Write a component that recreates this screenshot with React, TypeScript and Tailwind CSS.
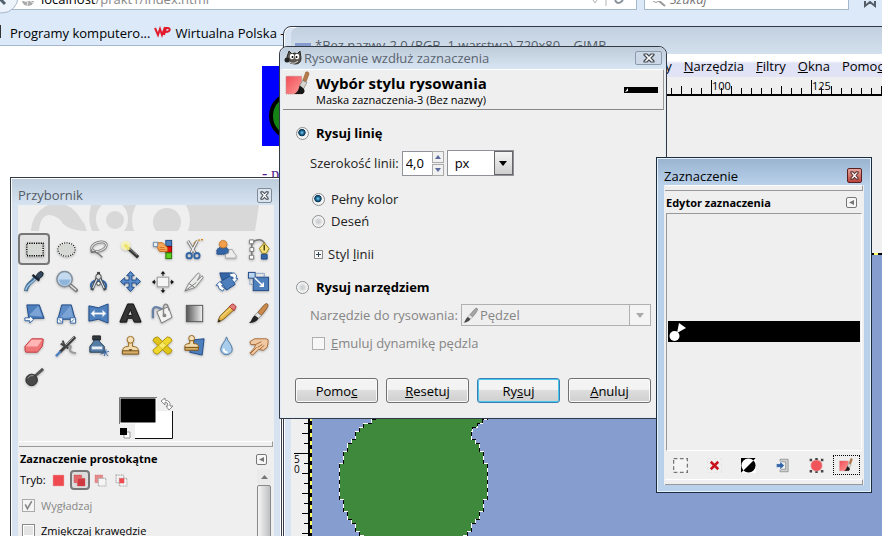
import type { ReactNode } from "react";

const INK = "#34495e";
const BLUE = "#4d7fbd";
const NAVY = "#204a87";

function Glyph({ children, size = 24 }: { children: ReactNode; size?: number }) {
  return (
    <svg width={size} height={size} viewBox="0 0 24 24" fill="none" aria-hidden="true">
      {children}
    </svg>
  );
}

function PaintBrush() {
  return (
    <>
      <path d="M18 3Q21 0 22 3Q22 6 15 14L11 11Z" fill="#c98a4b" stroke="#7a4a1c" strokeWidth=".8" />
      <path d="M11 11L15 14L12 17L8 14Z" fill="#e3e5e3" stroke="#777" strokeWidth=".7" />
      <path d="M8 14L12 17C10 21 6 22 2 22C5 20 5 16 8 14Z" fill="#222" />
    </>
  );
}

const tools: { name: string; art: ReactNode }[] = [
  {
    name: "Zaznaczenie prostokątne",
    art: (
      <>
        <rect x="4" y="5.500" width="17" height="13" fill="#d5d8d3" stroke="#fff" strokeWidth="1.500" />
        <rect x="4" y="5.500" width="17" height="13" stroke="#000" strokeWidth="1.500" strokeDasharray="1.400 1" />
      </>
    ),
  },
  {
    name: "Zaznaczenie eliptyczne",
    art: (
      <>
        <ellipse cx="12" cy="12" rx="9" ry="7" fill="#d5d8d3" stroke="#fff" strokeWidth="1.500" />
        <ellipse cx="12" cy="12" rx="9" ry="7" stroke="#222" strokeWidth="1.300" strokeDasharray="1.300 1.200" />
      </>
    ),
  },
  {
    name: "Odręczne zaznaczanie",
    art: (
      <>
        <ellipse cx="12.500" cy="9" rx="8" ry="4.500" transform="rotate(-18 12.5 9)" stroke="#777" strokeWidth="2.800" />
        <ellipse cx="12.500" cy="9" rx="8" ry="4.500" transform="rotate(-18 12.5 9)" stroke="#e3e3e3" strokeWidth="1.200" />
        <path d="M5 12Q3 15 6 15Q9 13 9 15Q12 16 16 20" stroke="#777" strokeWidth="1.500" />
      </>
    ),
  },
  {
    name: "Rozmyte zaznaczenie",
    art: (
      <>
        <circle cx="7" cy="8" r="5" fill="#fff9b0" opacity=".8" />
        <path d="M10 11L20 20" stroke="#333" strokeWidth="3.400" />
        <path d="M6 7L11 12" stroke="#eee36a" strokeWidth="3" />
        <path d="M11 11L19 18" stroke="#999" strokeWidth="1" />
      </>
    ),
  },
  {
    name: "Zaznaczenie według koloru",
    art: (
      <>
        <rect x="15.500" y="2.500" width="6" height="6" fill={BLUE} stroke={NAVY} />
        <rect x="15.500" y="9" width="6" height="6" fill="#e01010" stroke="#800" />
        <rect x="15.500" y="15.500" width="6" height="6" fill="#5fd020" stroke="#287a08" />
        <path d="M7 5L12 5L17 10V14L9 14L6 9Z" fill="#f7a85a" stroke="#c86416" />
        <path d="M2.500 4.500H7V9H2.500Z" fill="#e8eef5" stroke="#6b88a8" />
        <path d="M9 12H15M9 10H14" stroke="#c86416" strokeWidth=".8" />
      </>
    ),
  },
  {
    name: "Nożyce",
    art: (
      <>
        <path d="M11 9Q11 1 22 2" stroke="#d18a20" strokeWidth="1.500" strokeDasharray="2 1" />
        <path d="M5 3L13 16M15 3L8 16" stroke="#777" strokeWidth="3" />
        <path d="M5 3L13 16M15 3L8 16" stroke="#eee" strokeWidth="1.300" />
        <circle cx="6.500" cy="18.500" r="2.800" stroke="#3465a4" strokeWidth="2" />
        <circle cx="14.500" cy="18.500" r="2.800" stroke="#3465a4" strokeWidth="2" />
      </>
    ),
  },
  {
    name: "Zaznaczanie pierwszego planu",
    art: (
      <>
        <path d="M2 17V12L5 10H12L14 12V17Z" fill="#3465a4" stroke={NAVY} strokeDasharray="2 .500" />
        <circle cx="8.500" cy="6.500" r="4" fill="#f2a04c" stroke="#b55d10" strokeDasharray="1.500 .700" />
        <path d="M11 21V17L14 16L15 12L18 12L20 16L22 18V21Z" fill="#ececec" stroke="#999" strokeWidth=".8" />
      </>
    ),
  },
  {
    name: "Ścieżki",
    art: (
      <>
        <path d="M5 3V21M6 4C15 -1 19 4 19 9" stroke="#777" strokeWidth="1.500" />
        <path d="M2.500 2H7V6H2.500ZM3 10H7V14H3ZM2.500 18H7V22H2.500Z" fill="#fff" stroke="#777" />
        <path d="M18 5L23 11L20 16H16L13 11Z" fill="#f5e581" stroke="#9a7b0c" />
        <path d="M18 7V13" stroke="#4a3c08" strokeWidth="1.500" />
        <path d="M15 17H21V22H15Z" fill="#3465a4" stroke={NAVY} />
      </>
    ),
  },
  {
    name: "Pobranie koloru",
    art: (
      <>
        <path d="M3 22C4 13 9 14 13 8" stroke="#406d91" strokeWidth="4" />
        <path d="M3 21C4 14 10 14 13 9" stroke="#9cc3e6" strokeWidth="1.500" />
        <path d="M10 5L17 11" stroke="#17222d" strokeWidth="2.500" />
        <path d="M13 7L16 3Q19 0 21 3Q22 6 17 9Z" fill={INK} stroke="#17222d" />
      </>
    ),
  },
  {
    name: "Powiększenie",
    art: (
      <>
        <path d="M16 16L22 21" stroke="#777" strokeWidth="4" strokeLinecap="round" />
        <path d="M16 16L22 21" stroke="#ddd" strokeWidth="1.500" />
        <circle cx="10" cy="9.500" r="8" fill="#c4daf1" stroke="#818d98" strokeWidth="1.500" />
        <path d="M4 10H16Q15 16 10 16Q5 16 4 10" fill="#8fb5db" />
      </>
    ),
  },
  {
    name: "Miara",
    art: (
      <>
        <path d="M12 2V7" stroke="#444" strokeWidth="3" />
        <path d="M5 20Q2 14 8 11M19 20Q22 14 16 11M8 13Q12 10 16 13" stroke="#3465a4" strokeWidth="2" />
        <path d="M11 7L5 21M13 7L19 21" stroke="#414a52" strokeWidth="3" />
        <path d="M11 8L6 19M13 8L18 19" stroke="#dce6ef" strokeWidth="1.200" />
        <circle cx="12" cy="7" r="2.800" fill="#ddd" stroke="#444" />
        <circle cx="12" cy="14" r="2" fill="#eee" stroke="#444" />
      </>
    ),
  },
  {
    name: "Przesunięcie",
    art: <path d="M12 1.500L16 6H13.500V10.500H18V8L22.500 12L18 16V13.500H13.500V18H16L12 22.500L8 18H10.500V13.500H6V16L1.500 12L6 8V10.500H10.500V6H8Z" fill="#5b8ccc" stroke={NAVY} />,
  },
  {
    name: "Wyrównanie",
    art: (
      <>
        <rect x="6.500" y="7.500" width="12" height="10" fill="#f4f4f4" stroke="#999" />
        <path d="M12.500 1L15 4H10ZM12.500 24L10 21H15ZM1 12.500L4 10V15ZM24 12.500L21 10V15Z" fill="#111" />
        <path d="M12.500 3V6M12.500 19V22M3 12.500H5M20 12.500H22" stroke="#111" strokeWidth="1.200" />
      </>
    ),
  },
  {
    name: "Kadrowanie",
    art: (
      <>
        <path d="M2 22L6 14L16 3L18 5L15 11L20 6L21 8L13 18Z" fill="#e9ebe9" stroke="#888" />
        <path d="M2 22L14 13M6 14L12 18" stroke="#777" />
      </>
    ),
  },
  {
    name: "Obrót",
    art: (
      <>
        <path d="M5 3H18V10H7Z" fill="#3465a4" stroke={NAVY} />
        <path d="M6 12L16 6L21 15L12 21Z" fill={BLUE} stroke={NAVY} />
        <path d="M15 4L20 3Q24 5 22 9H24L20 13L17 9H19Q20 7 16 7ZM5 12L1 16H3Q3 20 8 22L10 19Q7 18 7 16H9Z" fill="#fff" stroke="#3465a4" />
      </>
    ),
  },
  {
    name: "Skalowanie",
    art: (
      <>
        <rect x="6.500" y="7.500" width="16" height="14" fill={BLUE} stroke={NAVY} />
        <rect x="1.500" y="2.500" width="7" height="6" fill="#b9d5f1" stroke={NAVY} />
        <path d="M8 8L17 17M17 13V17H13" stroke="#fff" strokeWidth="1.500" />
        <path d="M10 3.500H18V8M3 10V15H6" stroke="#3465a4" strokeDasharray="1 1" />
      </>
    ),
  },
  {
    name: "Nachylenie",
    art: (
      <>
        <path d="M4 3H17L22 17H6Z" fill={BLUE} stroke={NAVY} />
        <path d="M6 14L16 4L20 15Z" fill="#7ba3d5" />
        <path d="M2 16.500H7V14L11 18L7 22V19.500H2Z" fill="#fff" stroke="#3465a4" />
      </>
    ),
  },
  {
    name: "Perspektywa",
    art: (
      <>
        <path d="M7 3H17L21 18H3Z" fill="#5d8cc6" stroke={NAVY} />
        <path d="M5 17L16 4L19 16Z" fill="#7ba3d5" />
        <path d="M2.500 16.500H8V22H2.500ZM16 16.500H21.500V22H16Z" fill="#fff" stroke="#3465a4" />
        <path d="M4 18L7 21M20 18L17 21" stroke="#3465a4" />
      </>
    ),
  },
  {
    name: "Odbicie",
    art: (
      <>
        <path d="M2 4L12 6L22 2V22L12 18L2 20Z" fill={BLUE} stroke={NAVY} />
        <path d="M4 12L8 8V11H16V8L20 12L16 16V13H8V16Z" fill="#fff" stroke="#8aaad0" strokeWidth=".7" />
      </>
    ),
  },
  {
    name: "Tekst",
    art: <path fillRule="evenodd" d="M9 2H15L22 18Q23 20 23 21H16L14 17H9L8 21H1Q1 20 2 18ZM12 8L9 14H14Z" fill="#343434" stroke="#111" />,
  },
  {
    name: "Wypełnienie kubełkiem",
    art: (
      <>
        <path d="M2 17V8Q3 4 8 6L12 8" stroke="#6a83a5" strokeWidth="2.500" />
        <path d="M6 10L18 5L22 16L11 22Z" fill="#f3f3f1" stroke="#777" />
        <path d="M13 13V5Q14 1 17 3L19 9" stroke="#888" strokeWidth="1.500" />
        <circle cx="14" cy="14" r="2" fill="#888" />
      </>
    ),
  },
  {
    name: "Gradient",
    art: (
      <>
        <defs>
          <linearGradient id="grayRamp">
            <stop stopColor="#555" />
            <stop offset="1" stopColor="#f3f3f3" />
          </linearGradient>
        </defs>
        <rect x="3.500" y="3.500" width="17" height="17" fill="url(#grayRamp)" stroke="#555" />
      </>
    ),
  },
  {
    name: "Ołówek",
    art: (
      <>
        <path d="M3 21L5 15L16 4L20 8L9 18Z" fill="#e5b947" stroke="#815b1b" />
        <path d="M15 5L18 2Q20 2 22 5L20 9Z" fill="#e57a7a" stroke="#aa3030" />
        <path d="M6 16L17 6" stroke="#ffe596" />
        <path d="M3 21L4 18L6 20Z" fill="#222" />
      </>
    ),
  },
  { name: "Pędzel", art: <PaintBrush /> },
  {
    name: "Gumka",
    art: (
      <>
        <path d="M9 5H20Q22 5 21 7L20 13L15 19H3Q2 19 2 13Z" fill="#ee7676" stroke="#c63c42" />
        <path d="M9 6H20L15 13H3Z" fill="#ffb5b5" />
      </>
    ),
  },
  {
    name: "Aerograf",
    art: (
      <>
        <path d="M12 13Q18 11 16 15T22 20" stroke="#999" strokeWidth="2" />
        <path d="M5 19L21 3" stroke="#3b3b3b" strokeWidth="3" />
        <path d="M11 12L20 3" stroke="#aaa" strokeWidth="1" />
        <path d="M6 10L14 15M8 7L10 12" stroke="#444" strokeWidth="2" />
        <path d="M1 23L6 18" stroke="#4d7fbd" strokeWidth="2.500" />
      </>
    ),
  },
  {
    name: "Stalówka",
    art: (
      <>
        <path d="M7 6H13V8L18 13V19H3V13L7 8Z" fill="#547ca5" stroke="#263e57" strokeLinejoin="round" />
        <path d="M6 2H14V6H6Z" fill="#303840" stroke="#222" />
        <path d="M5 14.500H16" stroke="#e5edf5" strokeWidth="3" />
        <path d="M14 21L23 18M17 17L22 23M18 23L20 16" stroke="#3465a4" />
      </>
    ),
  },
  {
    name: "Klonowanie",
    art: (
      <>
        <path d="M10 9H14V13Q21 13 20 18H4Q3 13 10 13Z" fill="#f2dcae" stroke="#9a6b23" />
        <circle cx="12" cy="6" r="3.500" fill="#f6e2ba" stroke="#9a6b23" />
        <path d="M3.500 17.500H20.500V21H3.500Z" fill="#d5ae68" stroke="#775018" />
        <path d="M10 16H14L12 18Z" fill="#5b3d12" />
      </>
    ),
  },
  {
    name: "Łatka",
    art: (
      <>
        <path d="M2 7Q3 3 7 3L22 17Q21 21 17 21Z" fill="#e2c51c" stroke="#ae9208" strokeLinejoin="round" />
        <path d="M17 3Q21 3 22 7L7 21Q3 21 2 17Z" fill="#f0d82e" stroke="#ae9208" strokeLinejoin="round" />
        <path d="M8 12L12 8L16 12L12 16Z" fill="#f9e969" stroke="#b89b0c" strokeDasharray="1 1" />
      </>
    ),
  },
  {
    name: "Klonowanie z perspektywą",
    art: (
      <>
        <path d="M12 6L22 5L20 22L7 19Z" fill={BLUE} stroke={NAVY} />
        <circle cx="9" cy="4.500" r="3" fill="#f6e2ba" stroke="#8e601c" />
        <path d="M7 7H11V10Q17 10 16 14H2Q1 10 7 10Z" fill="#f2dcae" stroke="#8e601c" />
        <path d="M2 14H16V17H2Z" fill="#d5ae68" stroke="#775018" />
      </>
    ),
  },
  {
    name: "Rozmycie",
    art: (
      <>
        <path d="M12 3C13 8 18 11 18 16A6 5.500 0 0 1 6 16C6 11 11 8 12 3Z" fill="#a8cceb" stroke="#527aa2" />
        <path d="M9 15Q9 19 13 19" stroke="#fff" strokeWidth="2" />
      </>
    ),
  },
  {
    name: "Rozsmarowanie",
    art: (
      <>
        <path d="M3 8L8 5L20 5Q23 5 22 9L21 14L17 17L12 16L6 22L3 20L8 14L9 11L4 11Z" fill="#f0c9a2" stroke="#a76b3a" />
        <path d="M9 11L15 8M11 14L16 11M13 16L18 12M4 20L10 14" stroke="#a76b3a" />
      </>
    ),
  },
  {
    name: "Rozjaśnianie",
    art: (
      <>
        <path d="M12 11L21 3" stroke="#555" strokeWidth="3" />
        <circle cx="9" cy="14.500" r="6" fill="#484848" stroke="#2b2b2b" />
        <path d="M5 13Q7 9 11 10" stroke="#999" />
      </>
    ),
  },
];

function StrokeIcon({ size }: { size: number }) {
  return (
    <Glyph size={size}>
      <defs>
        <linearGradient id="redFade" x1="0" y1="0" x2="1" y2="1">
          <stop stopColor="#f04e56" />
          <stop offset="1" stopColor="#ff9a97" />
        </linearGradient>
      </defs>
      <path d="M1 5H16V22H1Z" fill="url(#redFade)" stroke="#c2837d" strokeDasharray="1 1" />
      <path d="M20 1Q23 0 23 3L20 11L17 9Z" fill="#b67b4a" stroke="#8a5628" strokeWidth=".500" />
      <path d="M17 9L21 11L18 17L14 14Z" fill="#d5d5d0" stroke="#777" strokeWidth=".600" />
      <path d="M14 14L18 17Q20 20 17 22H9Q13 20 14 14Z" fill="#171717" />
    </Glyph>
  );
}

function Wilber() {
  return (
    <svg width="18" height="16" viewBox="0 0 18 16" aria-hidden="true">
      <path d="M3 7L5 1L8 4Q11 2 13 4L16 1L17 8Q17 14 11 14Q6 14 4 11Z" fill="#5b5751" stroke="#292724" />
      <ellipse cx="8" cy="6.500" rx="2.200" ry="2.700" fill="#fff" />
      <ellipse cx="13" cy="6.500" rx="2.200" ry="2.700" fill="#fff" />
      <circle cx="8.500" cy="7" r="1" />
      <circle cx="12.500" cy="7" r="1" />
      <circle cx="3" cy="10" r="2.500" fill="#222" />
      <path d="M5 12Q10 15 14 11" stroke="#ddd" fill="none" />
    </svg>
  );
}

function Cross({ wide = false, tint = "#444c55" }: { wide?: boolean; tint?: string }) {
  return (
    <svg width={wide ? 12 : 9} height={wide ? 10 : 9} viewBox="0 0 12 10" preserveAspectRatio="none" aria-hidden="true">
      <path d="M1 1H4L6 3L8 1H11V2L8 5L11 8V9H8L6 7L4 9H1V8L4 5L1 2Z" fill="#fff" stroke={tint} strokeWidth="1.200" strokeLinejoin="round" />
    </svg>
  );
}

function CollapseButton() {
  return (
    <button type="button" aria-label="Menu karty" className="flex size-[11px] items-center justify-center rounded-xs border border-[#777] bg-[#f6f6f6]">
      <svg width="7" height="7" viewBox="0 0 7 7"><path d="M6 1V6L1 3.500Z" fill="#777" /></svg>
    </button>
  );
}

const radioClass =
  "size-[13px] shrink-0 appearance-none rounded-full border border-[#8e8f8f] bg-[radial-gradient(circle,#cfd2d4_20%,#f4f4f4_60%)] checked:bg-[radial-gradient(circle_at_45%_42%,#7fd0ef_0%,#17618d_24%,#0c3550_38%,#f4f4f4_46%)]";
const pushClass =
  "h-[25px] flex-1 rounded-[3px] border border-[#707070] bg-linear-to-b from-[#f3f3f3] from-45% via-[#dddddd] via-50% to-[#cfcfcf] shadow-[inset_0_0_0_1px_#fafafa]";

function Browser() {
  return (
    <main className="h-full bg-white">
      <div className="relative h-[46px] border-b border-[#a5b7cc] bg-[#dbe9f8]">
        <div className="flex h-[10px] items-end overflow-hidden">
          <div className="flex h-[10px] w-[637px] items-end border-r border-b border-[#a5b7cc] bg-white pl-[22px] text-[#888]">
            <svg className="mr-1.5 shrink-0" width="13" height="8" viewBox="0 0 13 8"><circle cx="6" cy="-1" r="6" fill="#aaa" /><path d="M2 0L6 1L5 5M8 0L11 2" stroke="#eee" fill="none" /></svg>
            <span className="leading-[20px]"><span className="text-black">localhost</span>/prakt1/index.html</span>
            <svg className="mr-3 ml-auto" width="34" height="9" viewBox="0 0 34 9"><path d="M3 0L5 3L7 0M16 0V6" stroke="#b5b5b5" fill="none" /><path d="M25 0Q28 6 33 0" stroke="#8b949e" strokeWidth="2" fill="none" /></svg>
          </div>
          <div className="ml-[7px] flex h-[10px] w-[205px] items-end border border-t-0 border-[#a5b7cc] bg-white pl-2 text-[#777]">
            <svg className="mr-1" width="13" height="8" viewBox="0 0 13 8"><path d="M6 0L12 5" stroke="#999" strokeWidth="2" /><path d="M0 0Q3 3 6 0" stroke="#999" fill="none" /></svg>
            <i className="leading-[20px]">Szukaj</i>
          </div>
          <svg className="ml-[14px]" width="14" height="9" viewBox="0 0 14 9"><path d="M2 0V5L7 1L12 5V0" fill="none" stroke="#555e68" strokeWidth="2" /></svg>
        </div>
        <svg className="absolute top-0 left-0" width="18" height="15" viewBox="0 0 18 15"><circle cx="2" cy="-3" r="16" fill="#edf3fa" stroke="#a5b7cc" /><path d="M0 -1L5 4" stroke="#52606e" strokeWidth="3" /></svg>
        <nav className="flex h-[35px] items-end pb-[3px] text-black">
          <span className="mr-[9px] mb-1 h-[13px] w-px bg-[#333]" />
          <a href="#programy">Programy komputero...</a>
          <svg className="mr-1 mb-1 ml-1" width="17" height="12" viewBox="0 0 17 12"><path d="M1 2L4 9L6 3L8 9L11 1M10 9L12 2H14Q17 3 15 5Q14 6 11 6" fill="none" stroke="#e21b2d" strokeWidth="2" /></svg>
          <a href="#wp">Wirtualna Polska - ...</a>
        </nav>
      </div>
      <div className="pt-5 pl-[262px]">
        <svg width="80" height="80" viewBox="0 0 80 80" className="block"><path fill="#00f" d="M0 0H80V80H0Z" /><circle cx="31" cy="50" r="22" fill="#148514" stroke="#000" strokeWidth="4" /></svg>
        <a href="#p" className="mt-4 block font-['Liberation_Serif',serif] text-base text-[#551a8b]">- pr</a>
      </div>
    </main>
  );
}

// The disc and its beak are laid on a 4 px raster, as in a zoomed-in bitmap.
const CELL = 4;
function stairDisc(cx: number, cy: number, r: number) {
  const left: string[] = [];
  const right: string[] = [];
  for (let y = cy - r; y < cy + r; y += CELL) {
    const dy = y + CELL / 2 - cy;
    const reach = Math.sqrt(Math.max(0, r * r - dy * dy));
    const half = 2 + Math.round((reach - 2) / CELL) * CELL;
    left.push(`L${cx - half} ${y}L${cx - half} ${y + CELL}`);
    let edge = cx + half;
    if (dy < -48) edge = cx + 54 + Math.floor((-48 - dy) / CELL) * 5;
    right.unshift(`L${edge} ${y + CELL}L${edge} ${y}`);
  }
  return "M" + left.join("").slice(1) + right.join("") + "Z";
}

function ImageWindow() {
  const disc = stairDisc(103.5, 228.5, 74);
  return (
    <section className="absolute top-[26px] right-[-8px] bottom-[-8px] left-[283px] flex flex-col rounded-tl-lg border border-[#343b45] bg-[#d8e4f1] pl-[7px] shadow-[inset_0_0_0_1px_#fff]">
      <header className="flex h-[27px] shrink-0 items-center rounded-t-lg bg-linear-to-b from-[#c2d0df] to-[#d3e0ee] pt-2 pl-1 text-[#555e69]">
        <span className="mr-1 h-1 w-4 bg-[#839bcf]" />
        *Bez nazwy-2.0 (RGB, 1 warstwa) 720x80 – GIMP
      </header>
      <nav className="flex h-[23px] shrink-0 items-center gap-3 bg-linear-to-b from-white from-30% via-[#dfe3f5] via-40% to-[#e3e3f6] pl-[342px] text-black">
        <span>Kolory</span>
        <span><u>N</u>arzędzia</span>
        <span><u>F</u>iltry</span>
        <span><u>O</u>kna</span>
        <span>Pomo<u>c</u></span>
      </nav>
      <svg className="h-[19px] w-full shrink-0 bg-[#efefef]" aria-hidden="true">
        {Array.from({ length: 60 }, (_, i) => (
          <path key={i} d={`M${10.5 + i * 10} ${i % 10 === 1 ? 3 : i % 5 === 3 ? 9 : 11}V18`} stroke="#000" />
        ))}
        <path d="M18 18H620" stroke="#000" strokeWidth="2" />
        <text x="421" y="13" fontSize="11" fill="#000">100</text>
        <text x="521" y="13" fontSize="11" fill="#000">125</text>
        <path d="M420.500 3V18M520.500 3V18" stroke="#000" />
      </svg>
      <div className="flex min-h-0 flex-1 bg-[#efefef]">
        <svg className="h-full w-[19px] shrink-0" aria-hidden="true">
          {Array.from({ length: 50 }, (_, i) => (
            <path key={i} d={`M${i % 10 === 5 ? 3 : i % 2 ? 11 : 13} ${7.5 + i * 10}H18`} stroke="#000" />
          ))}
          <path d="M18 0V500" stroke="#000" strokeWidth="2" />
          <text x="3" y="367" fontSize="10" fill="#000">5</text>
          <text x="3" y="377" fontSize="10" fill="#000">0</text>
        </svg>
        <div className="mt-[157px] flex-1 bg-[#859dcf]">
          <svg className="h-full w-full" aria-hidden="true">
            <g shapeRendering="crispEdges">
              <path d={disc} fill="#3e893c" stroke="#fff" />
              <path d={disc} fill="none" stroke="#000" strokeDasharray="4 4" />
              <path d="M0 1H580M1 0V500" stroke="#ffff65" strokeWidth="2" />
              <path d="M0 1H580M1 0V500" stroke="#000" strokeWidth="2" strokeDasharray="4 4" />
            </g>
          </svg>
        </div>
      </div>
    </section>
  );
}

const modes = [
  { name: "Zastąp", art: <rect x="2" y="2" width="20" height="20" fill="#ef4a50" stroke="#e88" strokeDasharray="2 1" /> },
  { name: "Dodaj", art: <><path d="M2 2H16V8H22V22H8V16H2Z" fill="#e5666a" stroke="#b33" strokeDasharray="2 1" /><path d="M9 9H22V22H9Z" fill="#cf3a40" /></> },
  { name: "Odejmij", art: <><rect x="2" y="2" width="14" height="14" fill="#e88a8c" stroke="#c55" strokeDasharray="2 1" /><rect x="8" y="8" width="14" height="14" fill="#f5f5f5" stroke="#aaa" strokeWidth="2" strokeDasharray="2 1" /></> },
  { name: "Przecięcie", art: <><path d="M2 2H16V16H2ZM8 8H22V22H8Z" fill="#f5f5f5" stroke="#aaa" strokeWidth="2" strokeDasharray="2 1" /><rect x="8" y="8" width="9" height="9" fill="#ef4a50" /></> },
];

function Toolbox() {
  return (
    <section className="absolute top-[177px] bottom-[-8px] left-[10px] flex w-[272px] flex-col border border-[#343b45] bg-[#d6e2f0] px-[7px] shadow-[inset_0_0_0_1px_#fff]">
      <header className="-mx-[6px] mt-px flex h-[26px] shrink-0 items-center justify-between bg-linear-to-b from-[#bdcddd] to-[#d6e3f1] pt-[6px] pr-2 pl-[6px] text-[#535c67]">
        <h2>Przybornik</h2>
        <button type="button" aria-label="Zamknij przybornik" className="flex size-[15px] items-center justify-center rounded-xs border border-[#7f8b99] bg-[#dae4ef]"><Cross /></button>
      </header>
      <div className="flex min-h-0 flex-1 flex-col bg-[#efefef]">
        <svg className="w-full shrink-0" height="26" viewBox="0 0 256 26" preserveAspectRatio="none" aria-hidden="true">
          <path d="M13 26Q14 8 30 0H241L237 26Z" fill="#d8d8d8" />
          <path d="M21 26Q22 10 32 10Q42 12 45 19Q52 25 66 26Z" fill="#efefef" />
          <path d="M48 0Q58 4 66 19Q65 8 71 0Z" fill="#efefef" />
          <path d="M66 8Q65 18 69 26H74Q69 14 73 0H68Z" fill="#efefef" />
          <ellipse cx="94" cy="14" rx="16" ry="18" fill="#efefef" />
          <circle cx="97" cy="15" r="9" fill="#d8d8d8" />
          <circle cx="143" cy="15" r="29" fill="#efefef" />
          <circle cx="149" cy="17" r="14" fill="#d8d8d8" />
        </svg>
        <div className="mt-0.5 grid shrink-0 grid-cols-8">
          {tools.map((tool, i) => (
            <button
              key={tool.name}
              type="button"
              aria-label={tool.name}
              className={`flex h-8 items-center justify-center ${i === 0 ? "rounded-sm border-2 border-[#777] bg-[#e2e2e2]" : ""}`}
            >
              <span className="drop-shadow-[0_1px_1px_#00000040]"><Glyph size={23}>{tool.art}</Glyph></span>
            </button>
          ))}
        </div>
        <svg className="mt-1 ml-[101px] shrink-0" width="56" height="44" viewBox="0 0 56 44" role="img" aria-label="Kolory pierwszego planu i tła">
          <path d="M16 14H54V42H16Z" fill="#fff" /><path d="M53.500 14V41.500H16" stroke="#111" fill="none" />
          <path d="M1 1H37V26H1Z" fill="#000" stroke="#fff" /><path d="M.500 27V.500H38" stroke="#777" fill="none" />
          <path d="M5 35H11V41H5Z" fill="#fff" stroke="#999" /><path d="M1 31H8V38H1Z" />
          <path d="M42 4L46 1V3Q52 4 51 9H54L50 13L47 9H49Q49 5 46 5V8Z" fill="#fff" stroke="#888" />
        </svg>
        <div className="mx-px h-1.5 shrink-0 border-t border-r border-b border-t-white border-r-[#999] border-b-[#999]" />
        <div className="flex shrink-0 items-center justify-between pt-1 pr-[7px] pl-0.5 text-[11px] leading-[16px] text-black">
          <h3 className="font-bold">Zaznaczenie prostokątne</h3>
          <CollapseButton />
        </div>
        <div className="flex min-h-0 flex-1 text-[11px] text-black">
          <div className="flex-1 pl-0.5">
            <div className="flex h-[26px] items-center gap-px">
              <span className="mr-0.5">Tryb:</span>
              {modes.map((mode, i) => (
                <button key={mode.name} type="button" aria-label={mode.name} className={`flex h-5 w-5 items-center justify-center ${i === 1 ? "rounded-sm border-2 border-[#777] bg-[#ddd]" : ""}`}>
                  <Glyph size={13}>{mode.art}</Glyph>
                </button>
              ))}
            </div>
            <label className="flex h-[25px] items-center gap-[6px] pl-0.5 text-[#888]">
              <span className="relative flex">
                <input type="checkbox" defaultChecked disabled className="size-[13px] appearance-none border border-[#aaa] bg-[#f5f5f5]" />
                <svg className="absolute top-0 left-0" width="13" height="13" viewBox="0 0 12 12"><path d="M3 5L5 9L9 2" stroke="#888" strokeWidth="1.500" fill="none" /></svg>
              </span>
              Wygładzaj
            </label>
            <label className="flex h-[25px] items-center gap-[6px] pl-0.5">
              <input type="checkbox" className="size-[13px] appearance-none border border-[#888] bg-[#e4e4e4] shadow-[inset_0_0_0_1px_#fff]" />
              Zmiękczaj krawędzie
            </label>
          </div>
          <div className="mt-0.5 mr-[3px] w-[14px] bg-[#eaeaea]">
            <div className="flex h-4 items-center justify-center"><svg width="7" height="4" viewBox="0 0 7 4"><path d="M0 4L3.500 0L7 4Z" fill="#777" /></svg></div>
            <div className="h-24 rounded-xs border border-[#888] bg-linear-to-r from-[#f5f5f5] to-[#bfc0c1]" />
          </div>
        </div>
      </div>
    </section>
  );
}

function StrokeDialog() {
  return (
    <form className="absolute top-[46px] left-[279px] w-[388px] rounded-t-lg border border-[#343b45] bg-[#efefef] pb-[15px] text-[#222] shadow-[inset_0_0_0_1px_#e3ecf6]" onSubmit={(e) => e.preventDefault()}>
      <header className="flex h-[22px] items-center rounded-t-lg bg-linear-to-b from-[#becbd9] to-[#d8e5f2] pr-1 pl-1 text-[#5a6470]">
        <Wilber />
        <h2 className="ml-0.5 flex-1">Rysowanie wzdłuż zaznaczenia</h2>
        <button type="button" aria-label="Zamknij" className="flex h-[14px] w-[27px] items-center justify-center rounded-xs border border-[#8c9bad] bg-[#ccd8e5]"><Cross wide /></button>
      </header>
      <div className="mr-0.5 ml-[3px] flex h-[41px] items-center border-t border-r border-b border-t-white border-r-[#999] border-b-[#888] pr-[5px] pl-0.5 text-black">
        <div className="mb-3"><StrokeIcon size={25} /></div>
        <div className="ml-[6px] flex-1">
          <h1 className="text-[15px] leading-[20px] font-bold">Wybór stylu rysowania</h1>
          <p className="text-[11px] leading-[14px]">Maska zaznaczenia-3 (Bez nazwy)</p>
        </div>
        <svg width="34" height="6" viewBox="0 0 34 6"><path d="M0 0H34V6H0Z" /><path d="M1 5L4 1V4Z" fill="#fff" /></svg>
      </div>
      <div className="px-[15px] pt-[13px]">
        <label className="flex h-5 items-center gap-[7px] pl-px font-bold text-black">
          <input type="radio" name="method" defaultChecked className={radioClass} />
          Rysuj linię
        </label>
        <div className="mt-[7px] flex h-[26px] items-center pl-[15px]">
          <label htmlFor="line-width" className="mr-[3px]">Szerokość linii:</label>
          <input id="line-width" defaultValue="4,0" className="h-[25px] w-[30px] border border-r-0 border-[#8f9399] bg-white pl-[3px] text-black" />
          <span className="mr-[3px] flex flex-col gap-px">
            <button type="button" aria-label="Zwiększ" className="flex h-3 w-3 items-center justify-center border border-[#aaa] bg-[#f1f1f1]"><svg width="6" height="4" viewBox="0 0 6 4"><path d="M0 4L3 0L6 4Z" fill="#5c6b9c" /></svg></button>
            <button type="button" aria-label="Zmniejsz" className="flex h-3 w-3 items-center justify-center border border-[#aaa] bg-[#f1f1f1]"><svg width="6" height="4" viewBox="0 0 6 4"><path d="M0 0L3 4L6 0Z" fill="#5c6b9c" /></svg></button>
          </span>
          <span className="relative w-[67px]">
            <select aria-label="Jednostka" className="block h-[26px] w-full appearance-none border border-[#8f9399] bg-white pl-[7px] text-black"><option>px</option></select>
            <span className="pointer-events-none absolute inset-y-px right-px flex w-[19px] items-center justify-center border border-[#666] bg-linear-to-b from-[#f5f5f5] to-[#cfcfcf]"><svg width="8" height="5" viewBox="0 0 8 5"><path d="M0 0H8L4 5Z" /></svg></span>
          </span>
        </div>
        <label className="mt-3 flex h-[22px] items-center gap-[6px] pl-[17px]">
          <input type="radio" name="fill" defaultChecked className={radioClass} />
          Pełny kolor
        </label>
        <label className="flex h-[22px] items-center gap-[6px] pl-[17px]">
          <input type="radio" name="fill" className={radioClass} />
          Deseń
        </label>
        <button type="button" className="mt-[11px] flex h-[22px] items-center gap-[5px] pl-[19px]">
          <svg width="9" height="9" viewBox="0 0 9 9"><path d="M.500 .500H8.500V8.500H.500Z" fill="#f8f8f8" stroke="#888" /><path d="M2 4.500H7M4.500 2V7" stroke="#34495e" /></svg>
          <span>Styl <u>l</u>inii</span>
        </button>
        <label className="mt-3 flex h-5 items-center gap-[7px] pl-px font-bold text-black">
          <input type="radio" name="method" className={radioClass} />
          Rysuj narzędziem
        </label>
        <div className="mt-[7px] flex h-[22px] items-center gap-[3px] pl-[15px] text-[#858585]">
          <label htmlFor="paint-tool">Narzędzie do rysowania:</label>
          <span className="relative flex-1">
            <select id="paint-tool" disabled className="block h-[22px] w-full appearance-none border border-[#b0b0b0] pl-[18px]"><option>Pędzel</option></select>
            <span className="pointer-events-none absolute top-[3px] left-px opacity-80 grayscale"><Glyph size={17}><PaintBrush /></Glyph></span>
            <span className="pointer-events-none absolute inset-y-0 right-0 flex w-[22px] items-center justify-center border border-[#b0b0b0] bg-[#f4f4f4]"><svg width="8" height="5" viewBox="0 0 8 5"><path d="M0 0H8L4 5Z" fill="#aaa" /></svg></span>
          </span>
        </div>
        <label className="mt-[7px] flex h-5 items-center gap-[6px] pl-[17px] text-[#858585]">
          <input type="checkbox" disabled className="size-[13px] appearance-none border border-[#b0b0b0] bg-[#f7f7f7]" />
          <span><u>E</u>muluj dynamikę pędzla</span>
        </label>
        <div className="mt-[25px] flex gap-2 text-black">
          <button type="button" className={pushClass}>Pomo<u>c</u></button>
          <button type="button" className={pushClass}><u>R</u>esetuj</button>
          <button type="submit" className="h-[25px] flex-1 rounded-[3px] border border-[#3c7fb1] bg-linear-to-b from-[#f3f3f3] from-45% via-[#dddddd] via-50% to-[#cfcfcf] shadow-[inset_0_0_0_1px_#48c8ee]">Ry<u>s</u>uj</button>
          <button type="button" className={pushClass}><u>A</u>nuluj</button>
        </div>
      </div>
    </form>
  );
}

const actions = [
  { name: "Zaznacz wszystko", art: <rect x="1" y="1" width="22" height="22" fill="#f5f5f5" stroke="#777" strokeWidth="2" strokeDasharray="6 4" /> },
  { name: "Usuń zaznaczenie", art: <><rect x="1" y="1" width="22" height="22" stroke="#ddd" strokeDasharray="5 5" /><path d="M6 6L18 18M18 6L6 18" stroke="#c8141e" strokeWidth="4" /></> },
  { name: "Odwróć", art: <><path d="M0 0H24L0 24Z" fill="#000" /><path d="M24 0V24H0Z" fill="#fff" /><path d="M4 20A11 11 0 0 1 20 4Z" fill="#fff" /><path d="M4 20A11 11 0 0 0 20 4Z" fill="#000" /></> },
  { name: "Zapisz do kanału", art: <><path d="M8 2H21V22H8V18H17V6H8Z" fill="#cfd3d0" stroke="#777" /><path d="M2 9H8V5L15 12L8 19V15H2Z" fill="#3465a4" stroke="#fff" /></> },
  { name: "Na ścieżkę", art: <><circle cx="12" cy="12" r="9" fill="#f0555b" stroke="#d99" /><path d="M1 1H5V5H1ZM19 1H23V5H19ZM1 19H5V23H1ZM19 19H23V23H19ZM10 0H14V3H10ZM10 21H14V24H10Z" fill="#444" /></> },
];

function SelectionWindow() {
  return (
    <section className="absolute top-[157px] left-[656px] flex w-[216px] flex-col border border-[#1b2c3f] bg-[#b9d1ea] px-[7px] pb-[7px] text-black shadow-[inset_0_0_0_1px_#e4f0fb]">
      <header className="-mx-[6px] mt-px flex h-[26px] items-center justify-between bg-linear-to-b from-[#9ab4d1] to-[#b9d1ea] pt-[7px] pr-2 pl-[6px]">
        <h2>Zaznaczenie</h2>
        <button type="button" aria-label="Zamknij zaznaczenie" className="flex size-[15px] items-center justify-center rounded-xs border border-[#5c2020] bg-linear-to-b from-[#e6a59d] to-[#b8443a]"><Cross tint="#5a3030" /></button>
      </header>
      <div className="bg-[#efefef]">
        <div className="mx-px h-1.5 border-t border-r border-b border-t-white border-r-[#999] border-b-[#999]" />
        <div className="flex h-[22px] items-center justify-between pt-px pr-[7px] pl-0.5 text-[11px]">
          <h3 className="font-bold">Edytor zaznaczenia</h3>
          <CollapseButton />
        </div>
        <div className="mx-0.5 border border-t-[#999] border-r-white border-b-white border-l-[#999] px-px pt-[107px] pb-[108px]">
          <svg className="block h-[21px] w-full bg-black" role="img" aria-label="Podgląd maski"><circle cx="6.500" cy="15" r="5" fill="#fff" /><path d="M11 2L18 7L9 12Z" fill="#fff" /></svg>
        </div>
        <div className="flex h-7 items-center">
          {actions.map((action) => (
            <button key={action.name} type="button" aria-label={action.name} className="flex flex-1 justify-center"><Glyph size={15}>{action.art}</Glyph></button>
          ))}
          <button type="button" aria-label="Rysuj wzdłuż zaznaczenia" className="mr-1 flex h-5 w-[27px] items-center justify-center border border-dotted border-black"><StrokeIcon size={14} /></button>
        </div>
        <div className="mx-px h-1.5 border-t border-r border-b border-t-white border-r-[#999] border-b-[#999]" />
      </div>
    </section>
  );
}

export default function App() {
  return (
    <div className="relative h-screen w-full overflow-hidden font-['Open_Sans','Noto_Sans',sans-serif] text-[13px] leading-[18px]">
      <Browser />
      <ImageWindow />
      <Toolbox />
      <StrokeDialog />
      <SelectionWindow />
    </div>
  );
}
